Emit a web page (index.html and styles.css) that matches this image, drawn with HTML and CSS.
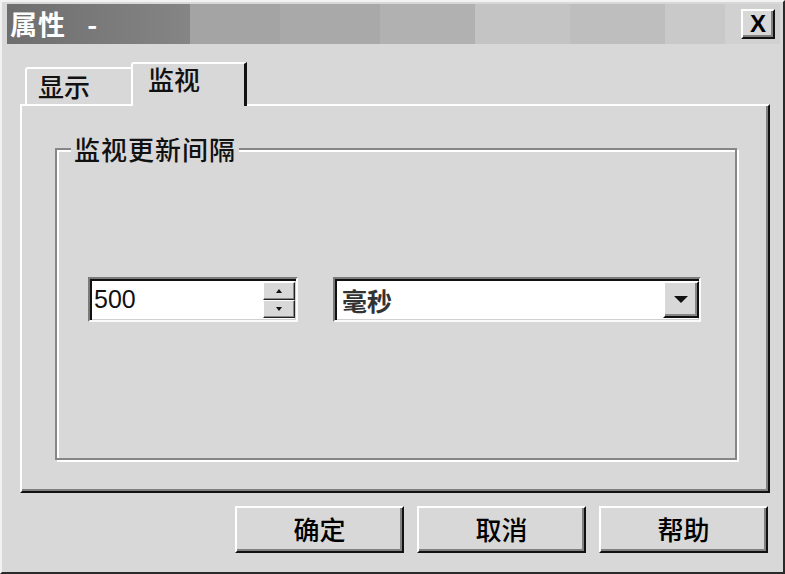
FILE: index.html
```html
<!DOCTYPE html>
<html lang="zh-CN">
<head>
  <meta charset="UTF-8" />
  <title>属性</title>
  <link rel="stylesheet" href="styles.css">
</head>
<body>
  <div class="dialog">
    <div class="titlebar">
      <span class="title">属性 -</span>
      <button class="close">X</button>
    </div>

    <div class="tabs">
      <div class="tab">显示</div>
      <div class="tab active">监视</div>
    </div>

    <div class="panel">
      <div class="group">
        <div class="group-label">监视更新间隔</div>
        <div class="row">
          <div class="spin">
            <span class="value">500</span>
            <div class="spin-btns">
              <span class="spin-btn up"></span>
              <span class="spin-btn down"></span>
            </div>
          </div>
          <div class="combo">
            <span class="value">毫秒</span>
            <span class="drop"></span>
          </div>
        </div>
      </div>
    </div>

    <div class="buttons">
      <button class="btn">确定</button>
      <button class="btn">取消</button>
      <button class="btn">帮助</button>
    </div>
  </div>
</body>
</html>
```

FILE: styles.css
```css
/* Page */
body, html {
  margin: 0;
  padding: 0;
  background: #d8d8d8;
  font-family: "Noto Sans CJK SC", "Liberation Sans", sans-serif;
  color: #111;
}

/* Window frame */
.dialog {
  width: 785px;
  height: 574px;
  box-sizing: border-box;
  border: 2px solid;
  border-color: #f2f2f2 #2a2a2a #2a2a2a #f2f2f2;
  padding: 2px 3px 0 5px;
  background: #d8d8d8;
  display: flex;
  flex-direction: column;
}

/* Title bar (caption blurred in the scan) */
.titlebar {
  height: 40px;
  display: flex;
  align-items: center;
  justify-content: space-between;
  padding: 0 5px 0 3px;
  background: linear-gradient(90deg,
    #6e6e6e 0px, #858585 183px,
    #a4a4a4 183px, #a4a4a4 273px,
    #a9a9a9 273px, #a9a9a9 373px,
    #b1b1b1 373px, #b1b1b1 468px,
    #c4c4c4 468px, #c4c4c4 563px,
    #bebebe 563px, #bebebe 658px,
    #c9c9c9 658px, #c9c9c9 718px,
    #d1d1d1 718px);
}
.title {
  color: #fff;
  font-size: 27px;
  font-weight: bold;
  line-height: 30px;
  letter-spacing: 1px;
  word-spacing: 14px;
}
.close {
  width: 34px;
  height: 30px;
  padding: 0;
  border: 2px solid;
  border-color: #fff #111 #111 #fff;
  box-shadow: inset -2px -2px 0 #808080;
  background: #d8d8d8;
  font-family: "Liberation Sans", sans-serif;
  font-size: 24px;
  font-weight: bold;
  line-height: 24px;
  color: #000;
}

/* Tabs */
.tabs {
  height: 60px;
  display: flex;
  align-items: flex-end;
  padding-left: 18px;
}
.tab {
  box-sizing: border-box;
  width: 106px;
  height: 37px;
  padding: 2px 0 0 11px;
  border-top: 2px solid #fff;
  border-left: 2px solid #fff;
  border-top-left-radius: 3px;
  font-size: 26px;
  font-weight: 500;
  line-height: 30px;
}
.tab.active {
  position: relative;
  z-index: 1;
  width: 116px;
  height: 44px;
  margin-bottom: -2px;
  padding: 0 0 0 15px;
  border-right: 3px solid #111;
  background: #d8d8d8;
}

/* Tab page */
.panel {
  box-sizing: border-box;
  width: 750px;
  height: 389px;
  margin-left: 13px;
  border: 2px solid;
  border-color: #fff #111 #111 #fff;
  box-shadow: inset -2px -2px 0 #808080;
}

/* Etched group box */
.group {
  box-sizing: border-box;
  width: 682px;
  height: 312px;
  margin: 42px 0 0 33px;
  border: 2px solid #868686;
  box-shadow: inset 2px 2px 0 #fff, 2px 2px 0 #fff;
}
.group-label {
  width: fit-content;
  margin: -16px 0 0 14px;
  padding: 0 3px;
  background: #d8d8d8;
  font-size: 26px;
  font-weight: 500;
  line-height: 30px;
  letter-spacing: 1px;
}

.row {
  display: flex;
  gap: 35px;
  margin-top: 113px;
  padding-left: 31px;
}

/* Sunken fields */
.spin,
.combo {
  box-sizing: border-box;
  height: 45px;
  display: flex;
  align-items: center;
  border: 2px solid;
  border-color: #7a7a7a #fafafa #fafafa #7a7a7a;
  box-shadow: inset 2px 2px 0 #111, inset -1px -1px 0 #d0d0d0;
  background: #fff;
}
.spin {
  width: 210px;
}
.combo {
  width: 368px;
}
.spin .value {
  flex: 1;
  padding-left: 4px;
  font-family: "Liberation Sans", sans-serif;
  font-size: 25px;
}
.combo .value {
  flex: 1;
  padding-left: 7px;
  font-size: 25px;
  font-weight: bold;
  color: #333;
}

.spin-btns {
  align-self: stretch;
  width: 32px;
  display: flex;
  flex-direction: column;
  margin: 3px 1px 2px 0;
}
.spin-btn {
  flex: 1;
  display: flex;
  align-items: center;
  justify-content: center;
  border: 1px solid;
  border-color: #fff #222 #222 #fff;
  box-shadow: inset -1px -1px 0 #8a8a8a;
  background: #d8d8d8;
}
.spin-btn::after {
  content: "";
  border-left: 3px solid transparent;
  border-right: 3px solid transparent;
}
.spin-btn.up::after {
  border-bottom: 4px solid #111;
}
.spin-btn.down::after {
  border-top: 4px solid #111;
}

.drop {
  align-self: stretch;
  width: 36px;
  margin: 2px 0 2px 0;
  box-sizing: border-box;
  display: flex;
  align-items: center;
  justify-content: center;
  border: 2px solid;
  border-color: #fff #111 #111 #fff;
  box-shadow: inset -2px -2px 0 #868686;
  background: #d8d8d8;
}
.drop::after {
  content: "";
  border-left: 7px solid transparent;
  border-right: 7px solid transparent;
  border-top: 7px solid #111;
}

/* Dialog buttons */
.buttons {
  display: flex;
  justify-content: flex-end;
  gap: 13px;
  margin-top: 13px;
  padding-right: 12px;
}
.btn {
  width: 169px;
  height: 47px;
  padding: 0 0 2px;
  border: 2px solid;
  border-color: #fff #111 #111 #fff;
  box-shadow: inset -2px -2px 0 #808080;
  background: #d8d8d8;
  font-family: "Noto Sans CJK SC", sans-serif;
  font-size: 26px;
  font-weight: 500;
  color: #000;
}
```
